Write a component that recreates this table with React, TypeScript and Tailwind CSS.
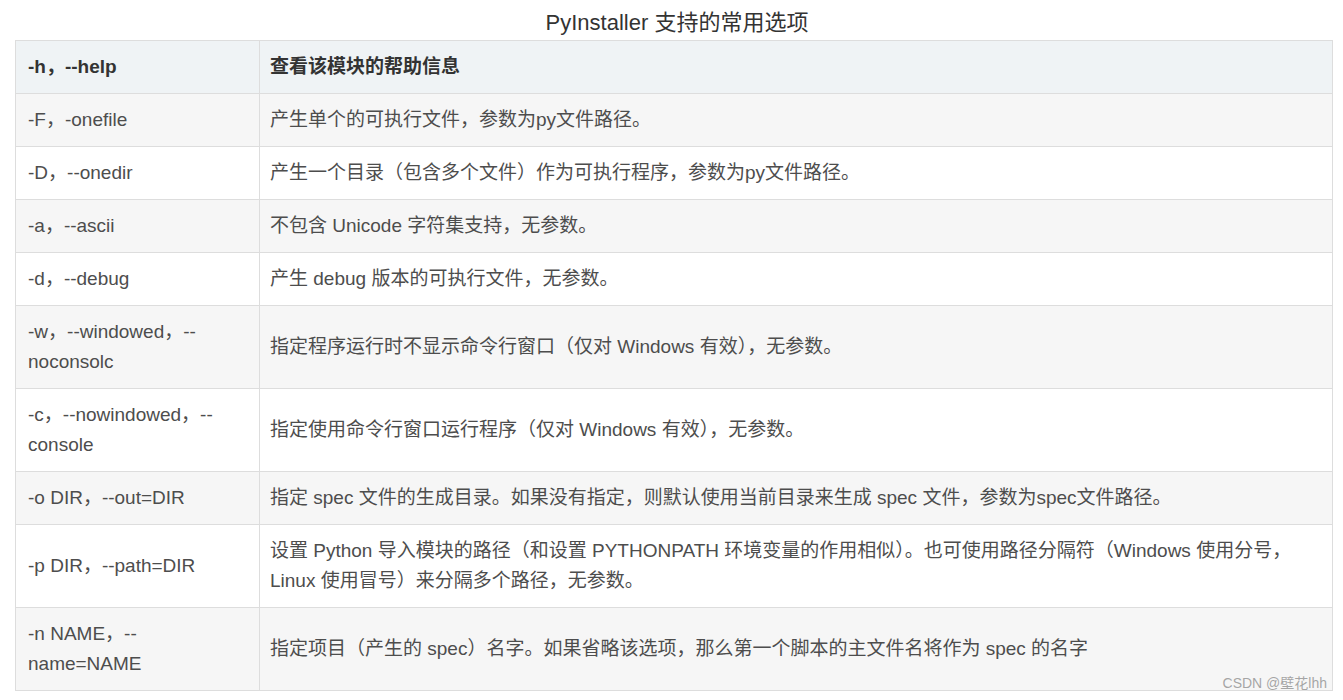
import React from "react";

const rows: { opt: React.ReactNode; desc: React.ReactNode }[] = [
  { opt: "-F，-onefile", desc: "产生单个的可执行文件，参数为py文件路径。" },
  { opt: "-D，--onedir", desc: "产生一个目录（包含多个文件）作为可执行程序，参数为py文件路径。" },
  { opt: "-a，--ascii", desc: "不包含 Unicode 字符集支持，无参数。" },
  { opt: "-d，--debug", desc: "产生 debug 版本的可执行文件，无参数。" },
  {
    opt: (
      <>
        -w，--windowed，--
        <br />
        noconsolc
      </>
    ),
    desc: "指定程序运行时不显示命令行窗口（仅对 Windows 有效），无参数。",
  },
  {
    opt: (
      <>
        -c，--nowindowed，--
        <br />
        console
      </>
    ),
    desc: "指定使用命令行窗口运行程序（仅对 Windows 有效），无参数。",
  },
  {
    opt: "-o DIR，--out=DIR",
    desc: "指定 spec 文件的生成目录。如果没有指定，则默认使用当前目录来生成 spec 文件，参数为spec文件路径。",
  },
  {
    opt: "-p DIR，--path=DIR",
    desc: (
      <>
        设置 Python 导入模块的路径（和设置 PYTHONPATH 环境变量的作用相似）。也可使用路径分隔符（Windows 使用分号，
        <br />
        Linux 使用冒号）来分隔多个路径，无参数。
      </>
    ),
  },
  {
    opt: (
      <>
        -n NAME，--
        <br />
        name=NAME
      </>
    ),
    desc: "指定项目（产生的 spec）名字。如果省略该选项，那么第一个脚本的主文件名将作为 spec 的名字",
  },
];

export default function App() {
  return (
    <div className="w-[1343px] h-[700px] bg-white overflow-hidden font-['Liberation_Sans','Noto_Sans_CJK_SC',sans-serif] text-[19px] text-[#4d4d4d]">
      <div className="relative ml-[15px] w-[1318px]">
        <div className="h-[40px] pt-[6px] pl-[6px] leading-[34px] text-center text-[22px] text-[#333]">
          PyInstaller 支持的常用选项
        </div>
        <table className="w-[1318px] border-collapse table-fixed">
          <colgroup>
            <col className="w-[244px]" />
            <col />
          </colgroup>
          <thead>
            <tr className="bg-[#eff3f5]">
              <th className="border border-[#dddddd] px-[12px] py-[11px] leading-[30px] text-left font-bold text-[#333]">
                -h，--help
              </th>
              <th className="border border-[#dddddd] pl-[10px] pr-[12px] py-[11px] leading-[30px] text-left font-bold text-[#333]">
                查看该模块的帮助信息
              </th>
            </tr>
          </thead>
          <tbody>
            {rows.map((r, i) => (
              <tr key={i} className={i % 2 === 0 ? "bg-[#f6f6f6]" : "bg-white"}>
                <td className="border border-[#dddddd] px-[12px] py-[11px] leading-[30px] align-middle whitespace-nowrap">
                  {r.opt}
                </td>
                <td className="border border-[#dddddd] pl-[10px] pr-[12px] py-[11px] leading-[30px] align-middle whitespace-nowrap">
                  {r.desc}
                </td>
              </tr>
            ))}
          </tbody>
        </table>
        <div className="absolute right-[6px] top-[676px] text-[14px] leading-[15px] text-[#a5a5a5] [text-shadow:0_0_1px_#fff]">
          CSDN @壁花lhh
        </div>
      </div>
    </div>
  );
}
